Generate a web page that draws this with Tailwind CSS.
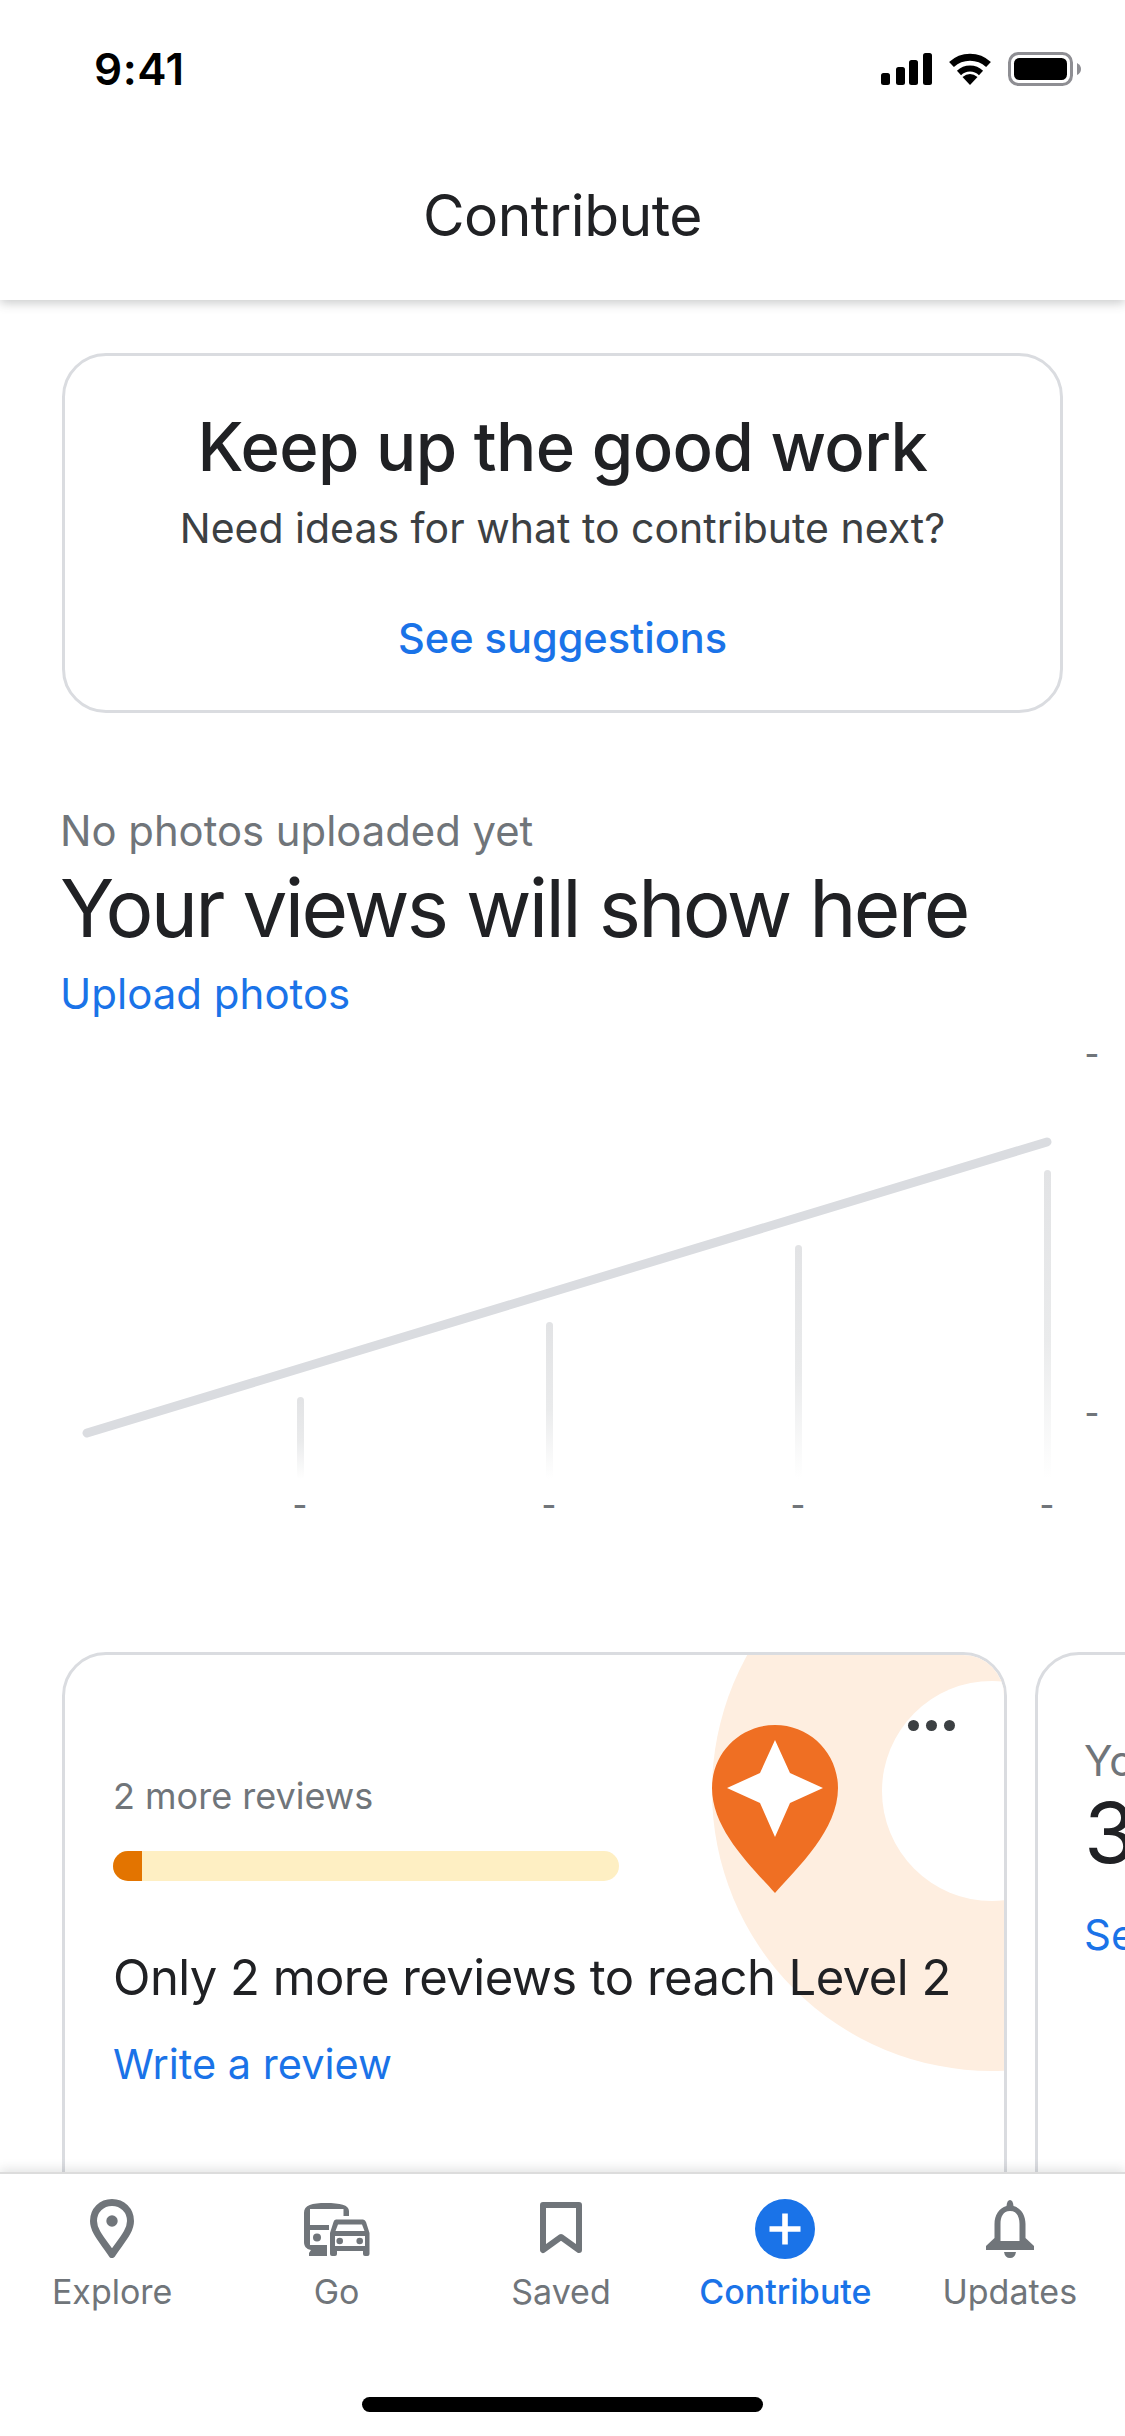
<!DOCTYPE html>
<html>
<head>
<meta charset="utf-8">
<script src="https://cdn.jsdelivr.net/npm/@tailwindcss/browser@4"></script>
</head>
<body class="bg-white">
<div class="w-[1125px] h-[2436px] flex flex-col overflow-hidden bg-white font-['Inter',sans-serif] text-[#202124]">

  <header class="relative z-10 h-[300px] shrink-0 flex flex-col bg-white shadow-[0_3px_10px_rgba(60,64,67,0.28)]">
    <div class="h-[138px] flex items-center justify-between pl-[94px] pr-[43px]">
      <span class="text-[44px] leading-none font-semibold text-black tracking-[0.5px]">9:41</span>
      <div class="flex items-center">
        <svg width="52" height="33" viewBox="0 0 52 33" class="mr-[15px]" fill="#000">
          <rect x="0" y="20" width="9" height="12" rx="2.5"/>
          <rect x="15" y="14" width="9" height="18" rx="2.5"/>
          <rect x="28" y="7" width="9" height="25" rx="2.5"/>
          <rect x="42" y="0" width="9" height="32" rx="2.5"/>
        </svg>
        <svg width="44" height="34" viewBox="0 0 44 34" class="mr-[16px]" fill="none">
          <path d="M3.5 12.5 A 27 27 0 0 1 40.5 12.5" stroke="#000" stroke-width="7"/>
          <path d="M11 21 A 16 16 0 0 1 33 21" stroke="#000" stroke-width="6"/>
          <path d="M22 33 L14.5 25 Q22 19 29.5 25 Z" fill="#000"/>
        </svg>
        <svg width="74" height="34" viewBox="0 0 74 34" fill="none">
          <rect x="1.5" y="1.5" width="62" height="31" rx="9" stroke="#8e8e93" stroke-width="3"/>
          <rect x="6" y="6" width="53" height="22" rx="5.5" fill="#000"/>
          <path d="M69 11 Q73 13 73 17 Q73 21 69 23 Z" fill="#8e8e93"/>
        </svg>
      </div>
    </div>
    <div class="flex-1 flex items-center justify-center pb-[8px]">
      <h1 class="text-[57px] leading-none font-normal tracking-[-0.5px]">Contribute</h1>
    </div>
  </header>

  <main class="flex-1 overflow-hidden min-h-0">
    <section class="mt-[53px] mx-[62px] h-[360px] rounded-[44px] border-[3px] border-[#dadce0] flex flex-col items-center pt-[51px]">
      <h2 class="text-[67px] leading-[80px] font-medium tracking-[-0.6px]">Keep up the good work</h2>
      <p class="text-[41px] leading-[50px] mt-[16px] text-[#3c4043]">Need ideas for what to contribute next?</p>
      <a class="text-[41.5px] leading-[50px] mt-[60px] font-medium text-[#1a73e8]">See suggestions</a>
    </section>

    <section class="mt-[93px] pl-[60px]">
      <p class="text-[41.8px] leading-[50px] text-[#70757a]">No photos uploaded yet</p>
      <h2 class="text-[80px] leading-[96px] font-normal tracking-[-2.7px] mt-[4px]">Your views will show here</h2>
      <a class="block text-[42px] leading-[50px] mt-[13px] text-[#1a73e8]">Upload photos</a>
    </section>

    <svg width="1125" height="560" viewBox="0 1030 1125 560" class="block mt-[11px]" fill="none">
      <defs>
        <linearGradient id="bar" x1="0" y1="0" x2="0" y2="1">
          <stop offset="0" stop-color="#e2e3e5"/>
          <stop offset="0.55" stop-color="#eaebec"/>
          <stop offset="1" stop-color="#ffffff"/>
        </linearGradient>
      </defs>
      <line x1="87" y1="1433" x2="1047" y2="1142" stroke="#dadce0" stroke-width="9" stroke-linecap="round"/>
      <rect x="297" y="1397" width="7" height="82" rx="3.5" fill="url(#bar)"/>
      <rect x="546" y="1322" width="7" height="157" rx="3.5" fill="url(#bar)"/>
      <rect x="795" y="1245" width="7" height="234" rx="3.5" fill="url(#bar)"/>
      <rect x="1044" y="1170" width="7" height="309" rx="3.5" fill="url(#bar)"/>
      <g fill="#70757a" font-size="32" font-weight="500" text-anchor="middle" font-family="Inter, sans-serif">
        <text x="300" y="1516">-</text>
        <text x="549" y="1516">-</text>
        <text x="798" y="1516">-</text>
        <text x="1047" y="1516">-</text>
        <text x="1092" y="1065">-</text>
        <text x="1092" y="1424">-</text>
      </g>
    </svg>

    <div class="flex gap-[28px] pl-[62px] mt-[62px] w-[1125px]">
      <article class="relative shrink-0 w-[945px] h-[700px] rounded-[44px] border-[3px] border-[#dadce0] overflow-hidden pl-[48px] pt-[119px]">
        <div class="absolute left-[647px] top-[-144px] w-[560px] h-[560px] rounded-full bg-[#feeee0]"></div>
        <div class="absolute left-[817px] top-[26px] w-[220px] h-[220px] rounded-full bg-white"></div>
        <svg class="absolute left-[647px] top-[70px]" width="126" height="168" viewBox="0 0 126 168">
          <path d="M63 0 C28 0 0 28 0 63 C0 105 40 142 63 168 C86 142 126 105 126 63 C126 28 98 0 63 0 Z" fill="#ef6f23"/>
          <path d="M63 15 L78 48 L111 63 L78 78 L63 112 L48 78 L15 63 L48 48 Z" fill="#fff"/>
        </svg>
        <div class="absolute left-[843px] top-[65px] flex gap-[7px]">
          <span class="w-[11px] h-[11px] rounded-full bg-[#3c4043]"></span>
          <span class="w-[11px] h-[11px] rounded-full bg-[#3c4043]"></span>
          <span class="w-[11px] h-[11px] rounded-full bg-[#3c4043]"></span>
        </div>
        <div class="relative">
          <p class="text-[36px] leading-[44px] text-[#70757a]">2 more reviews</p>
          <div class="mt-[33px] w-[506px] h-[30px] rounded-full bg-[#feefc3] overflow-hidden">
            <div class="w-[29px] h-full bg-[#e37400]"></div>
          </div>
          <p class="mt-[67px] text-[49px] leading-[60px] tracking-[-0.55px]">Only 2 more reviews to reach Level 2</p>
          <a class="block mt-[31px] text-[41.5px] leading-[50px] text-[#1a73e8]">Write a review</a>
        </div>
      </article>
      <article class="shrink-0 w-[600px] h-[700px] rounded-[44px] border-[3px] border-[#dadce0] pl-[46px] pt-[81px]">
        <p class="text-[42px] leading-[50px] text-[#70757a]">Yo</p>
        <p class="text-[84px] leading-[96px] -mt-[1px]">3</p>
        <a class="block mt-[29px] text-[42px] leading-[50px] text-[#1a73e8]">Se</a>
      </article>
    </div>
  </main>

  <nav class="relative z-10 h-[264px] shrink-0 flex flex-col bg-white border-t-[2px] border-[#dcdcdc] shadow-[0_-3px_10px_rgba(60,64,67,0.15)] pt-[25px] pb-[24px]">
    <div class="grid grid-cols-5 pr-[3px] text-[34px] leading-[40px] text-[#70757a]">
      <div class="flex flex-col items-center">
        <div class="h-[60px]">
          <svg width="44" height="59" viewBox="0 0 44 59" fill="none">
            <path d="M22 3.5 C11.5 3.5 3.5 11.5 3.5 22 C3.5 33 14 43 22 55.5 C30 43 40.5 33 40.5 22 C40.5 11.5 32.5 3.5 22 3.5 Z" stroke="#70757a" stroke-width="7" stroke-linejoin="round"/>
            <circle cx="22" cy="22" r="5.7" fill="#70757a"/>
          </svg>
        </div>
        <span class="mt-[13px]">Explore</span>
      </div>
      <div class="flex flex-col items-center">
        <div class="h-[60px] pt-[1px]">
          <svg width="72" height="58" viewBox="0 0 72 58" fill="#70757a" fill-rule="evenodd">
            <path d="M3 13 C3 5 11 3 25 3 C39 3 48 5 48 11 V16 H42.5 V9 H9 V25 H28 V30 H9 V45 H26 V56 H8 V53 L10 50 C5 49 3 46 3 42 Z"/>
            <circle cx="16" cy="37.5" r="4"/>
            <path d="M35 19.5 H62 Q64 19.5 65 22 L68.5 33 V54 Q68.5 56 66.5 56 H64 Q62 56 62 54 V51 H36 V54 Q36 56 34 56 H31 Q29 56 29 54 V33 L32.5 22 Q33 19.5 35 19.5 Z M37 24.5 L34.5 31 H63.5 L61 24.5 Z M34 36 V46 H64 V36 Z"/>
            <circle cx="38.7" cy="41" r="3.3"/>
            <circle cx="58.7" cy="41" r="3.3"/>
          </svg>
        </div>
        <span class="mt-[13px]">Go</span>
      </div>
      <div class="flex flex-col items-center">
        <div class="h-[60px] pt-[3px]">
          <svg width="42" height="54" viewBox="0 0 42 54" fill="none">
            <path d="M3 3 H39 V48 L21 35 L3 48 Z" stroke="#70757a" stroke-width="6" stroke-linejoin="round"/>
          </svg>
        </div>
        <span class="mt-[13px]">Saved</span>
      </div>
      <div class="flex flex-col items-center text-[#1a73e8] font-medium">
        <div class="h-[60px]">
          <svg width="60" height="60" viewBox="0 0 60 60">
            <circle cx="30" cy="30" r="30" fill="#1a73e8"/>
            <path d="M27.2 14.5 H32.8 V27.2 H45.5 V32.8 H32.8 V45.5 H27.2 V32.8 H14.5 V27.2 H27.2 Z" fill="#fff"/>
          </svg>
        </div>
        <span class="mt-[13px]">Contribute</span>
      </div>
      <div class="flex flex-col items-center">
        <div class="h-[60px] pt-[1px]">
          <svg width="48" height="58" viewBox="0 0 48 58" fill="#70757a" fill-rule="evenodd">
            <path d="M24 0 Q27 0 27.5 6 C35 8 39.5 15 39.5 24 V38 L48 46 V50 H0 V46 L8.5 38 V24 C8.5 15 13 8 20.5 6 Q21 0 24 0 Z M24 11 C17 11 14.5 17 14.5 24 V41 H33.5 V24 C33.5 17 31 11 24 11 Z"/>
            <path d="M18 52 H30 Q29 58 24 58 Q19 58 18 52 Z"/>
          </svg>
        </div>
        <span class="mt-[13px]">Updates</span>
      </div>
    </div>
    <div class="mt-auto mx-auto w-[401px] h-[15px] rounded-full bg-black"></div>
  </nav>
</div>
</body>
</html>
